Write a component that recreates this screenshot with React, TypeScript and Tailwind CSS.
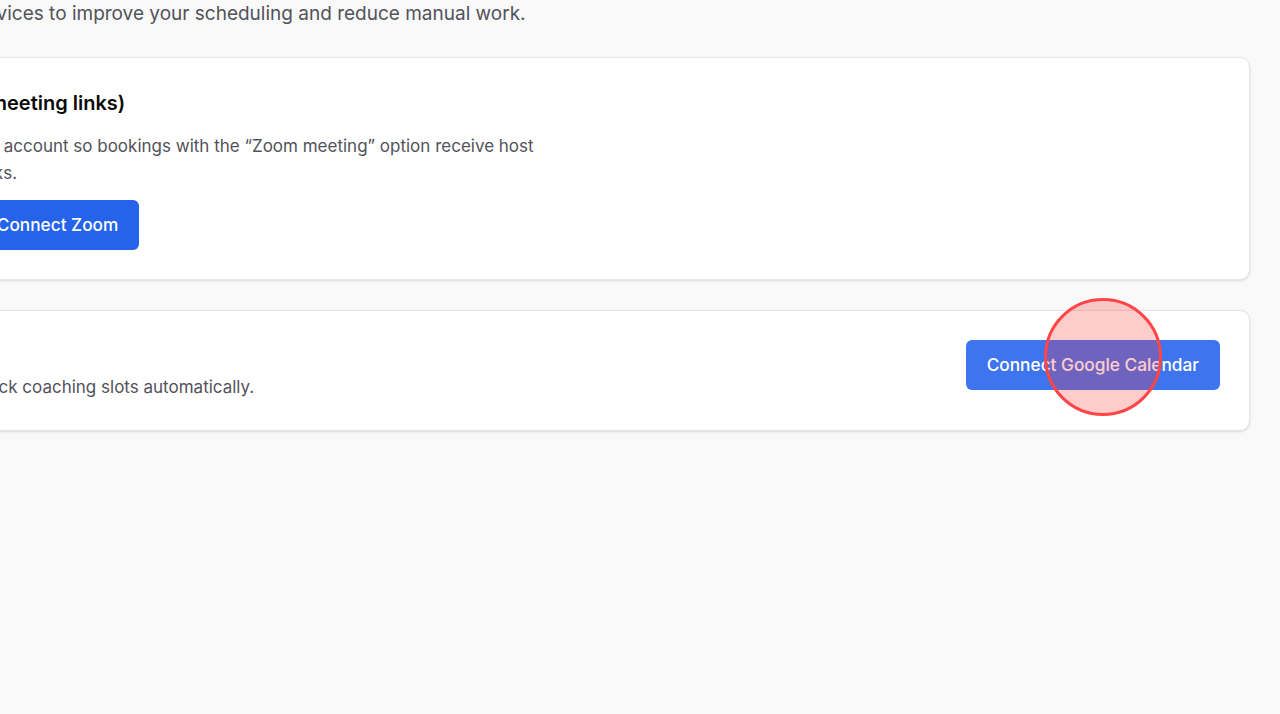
interface IntegrationCardProps {
  title: string;
  description: string;
  children?: React.ReactNode;
}

const ZoomCard: React.FC = () => {
  return (
    <div className="rounded-[10px] border border-[#e6e6e6] bg-white p-[29px] shadow-sm">
      <h2 className="text-[20px] font-semibold leading-8 text-[#0a0a0a]">
        Zoom (secure meeting links)
      </h2>
      <p className="mt-[14px] max-w-[700px] text-[17px] leading-[27px] text-[#52525b]">
        Connect the Zoom account so bookings with the “Zoom meeting” option
        receive host and participant links.
      </p>
      <div className="mt-[13px] flex items-center gap-2">
        <span className="rounded-full bg-zinc-100 px-2.5 py-1.5 text-[14px] text-zinc-600">
          Not connected
        </span>
        <button className="flex h-[50px] items-center rounded-md bg-[#2563eb] px-[21px] text-[17.25px] font-medium text-white">
          Connect Zoom
        </button>
      </div>
    </div>
  );
};

const CalendarCard: React.FC<IntegrationCardProps> = ({
  title,
  description,
  children,
}) => {
  return (
    <div className="flex items-start justify-between gap-6 rounded-[10px] border border-[#e6e6e6] bg-white p-[29px] shadow-sm">
      <div>
        <h2 className="text-[20px] font-semibold leading-[30px] text-[#0a0a0a]">
          {title}
        </h2>
        <p className="mt-1 text-[17px] leading-[27px] text-[#52525b]">
          {description}
        </p>
      </div>
      {children}
    </div>
  );
};

export default function App() {
  return (
    <div className="relative min-h-screen overflow-hidden bg-[#f9f9f9] font-['Inter',sans-serif]">
      <main className="-mt-[44px] ml-[-180px] mr-[30px] flex flex-col">
        <h1 className="text-3xl font-bold leading-9 text-[#0a0a0a]">
          Integrations
        </h1>
        <p className="mt-2 text-[19px] leading-[27px] text-[#52525b]">
          Connect helpful services to improve your scheduling and reduce
          manual work.
        </p>

        <div className="mt-[30px] flex flex-col gap-[30px]">
          <ZoomCard />
          <CalendarCard
            title="Calendar"
            description="Read events to block coaching slots automatically."
          >
            <button className="flex h-[50px] shrink-0 items-center rounded-md bg-[#3e75ef] px-[21px] text-[17.25px] font-medium text-white">
              Connect Google Calendar
            </button>
          </CalendarCard>
        </div>
      </main>

      {/* click marker */}
      <div className="pointer-events-none absolute left-[1044px] top-[298px] h-[118px] w-[118px] rounded-full border-[3px] border-[#ff4545] bg-[rgba(255,50,50,0.25)]" />
    </div>
  );
}
